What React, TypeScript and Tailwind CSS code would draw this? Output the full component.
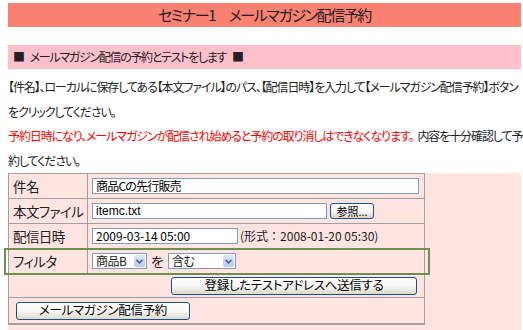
const inputCls =
  "h-[16px] border border-[#7f9db9] bg-white px-[3px] text-[12px] leading-[14px] text-black whitespace-nowrap";

function XpButton({ label, className }: { label: string; className: string }) {
  return (
    <div
      className={`flex items-center justify-center whitespace-nowrap rounded-[3px] border border-[#1f4f86] bg-gradient-to-b from-white via-[#f7f7f4] to-[#dcd9cc] leading-none text-black ${className}`}
    >
      {label}
    </div>
  );
}

function Select({ value, width }: { value: string; width: string }) {
  return (
    <div className={`flex h-[16px] items-stretch border border-[#7f9db9] bg-white ${width}`}>
      <span className="flex-1 whitespace-nowrap pl-[3px] text-[12px] leading-[14px] tracking-[-0.5px]">{value}</span>
      <span className="m-px flex w-[11px] items-center justify-center rounded-[2px] bg-gradient-to-b from-[#dbe6fd] to-[#b3c8f5]">
        <svg width="7" height="5" viewBox="0 0 7 5">
          <path d="M0.5 0.8 L3.5 3.8 L6.5 0.8" fill="none" stroke="#4d6185" strokeWidth="1.6" />
        </svg>
      </span>
    </div>
  );
}

const labelCls =
  "flex w-[79px] items-center whitespace-nowrap border-r border-[#a0a0a0] pl-[4px] text-[13.5px] tracking-[-0.6px]";

export default function App() {
  return (
    <div className="h-[330px] w-[523px] overflow-hidden bg-white font-['Noto_Sans_CJK_JP',sans-serif] text-[#222] [font-feature-settings:'palt']">
      <div className="ml-2 mt-[3px] flex h-[24px] w-[513px] items-center justify-center whitespace-nowrap bg-[#fa8072] text-[15px] tracking-[-1.4px] text-[#222]">
        セミナー1　メールマガジン配信予約
      </div>

      <div className="ml-2 mt-[18px] flex h-[24px] w-[513px] items-center gap-[6px] whitespace-nowrap bg-[#ffc0cb] pl-[5px] text-[12px] tracking-[-1.3px]">
        <span>■</span>
        <span>メールマガジン配信の予約とテストをします</span>
        <span>■</span>
      </div>

      <div className="ml-2 mt-[6px] whitespace-nowrap text-[12px] leading-[24.5px] tracking-[-1.1px]">
        <div>【件名】、ローカルに保存してある【本文ファイル】のパス、【配信日時】を入力して【メールマガジン配信予約】ボタン</div>
        <div>をクリックしてください。</div>
        <div>
          <span className="text-[#ff0000]">予約日時になり、メールマガジンが配信され始めると予約の取り消しはできなくなります。</span>
          <span className="ml-[4px]">内容を十分確認して予</span>
        </div>
        <div>約してください。</div>
      </div>

      <div className="ml-2 w-[513px] bg-[#ffe4e1] pb-[6px]">
        <div className="relative w-[417px] border-l border-t border-r border-[#a0a0a0] text-[12px]">
          <div className="flex h-[25px] border-b border-[#a0a0a0]">
            <div className={labelCls}>件名</div>
            <div className="flex flex-1 items-center pl-[4px]">
              <div className={`${inputCls} w-[327px] tracking-[-0.8px]`}>商品Cの先行販売</div>
            </div>
          </div>
          <div className="flex h-[25px] border-b border-[#a0a0a0]">
            <div className={labelCls}>本文ファイル</div>
            <div className="flex flex-1 items-center gap-[3px] pl-[4px]">
              <div className={`${inputCls} w-[235px] font-['Liberation_Sans',sans-serif] text-[11px]`}>itemc.txt</div>
              <XpButton label="参照..." className="h-[16px] w-[44px] text-[11px]" />
            </div>
          </div>
          <div className="flex h-[25px] border-b border-[#a0a0a0]">
            <div className={labelCls}>配信日時</div>
            <div className="flex flex-1 items-center gap-[2px] pl-[4px]">
              <div className={`${inputCls} w-[146px]`}>2009-03-14 05:00</div>
              <span className="whitespace-nowrap [font-feature-settings:normal]">(形式：2008-01-20 05:30)</span>
            </div>
          </div>
          <div className="flex h-[25px] border-b border-[#a0a0a0]">
            <div className={labelCls}>フィルタ</div>
            <div className="flex flex-1 items-center gap-[4px] pl-[4px]">
              <Select value="商品B" width="w-[55px]" />
              <span className="text-[14px]">を</span>
              <Select value="含む" width="w-[68px]" />
            </div>
          </div>
          <div className="flex h-[24px] items-center justify-end border-b border-[#a0a0a0] pr-[7px]">
            <XpButton label="登録したテストアドレスへ送信する" className="h-[18px] w-[246px] text-[12.5px] tracking-[-0.3px]" />
          </div>
          <div className="flex h-[27px] items-center border-b-2 border-[#a0a0a0] pl-[7px]">
            <XpButton label="メールマガジン配信予約" className="h-[18px] w-[174px] text-[12.5px] tracking-[-0.3px]" />
          </div>

          <div className="absolute left-[-5px] top-[74px] h-[27px] w-[426px] border-2 border-[#6f8f4f]" />
        </div>
      </div>
    </div>
  );
}
